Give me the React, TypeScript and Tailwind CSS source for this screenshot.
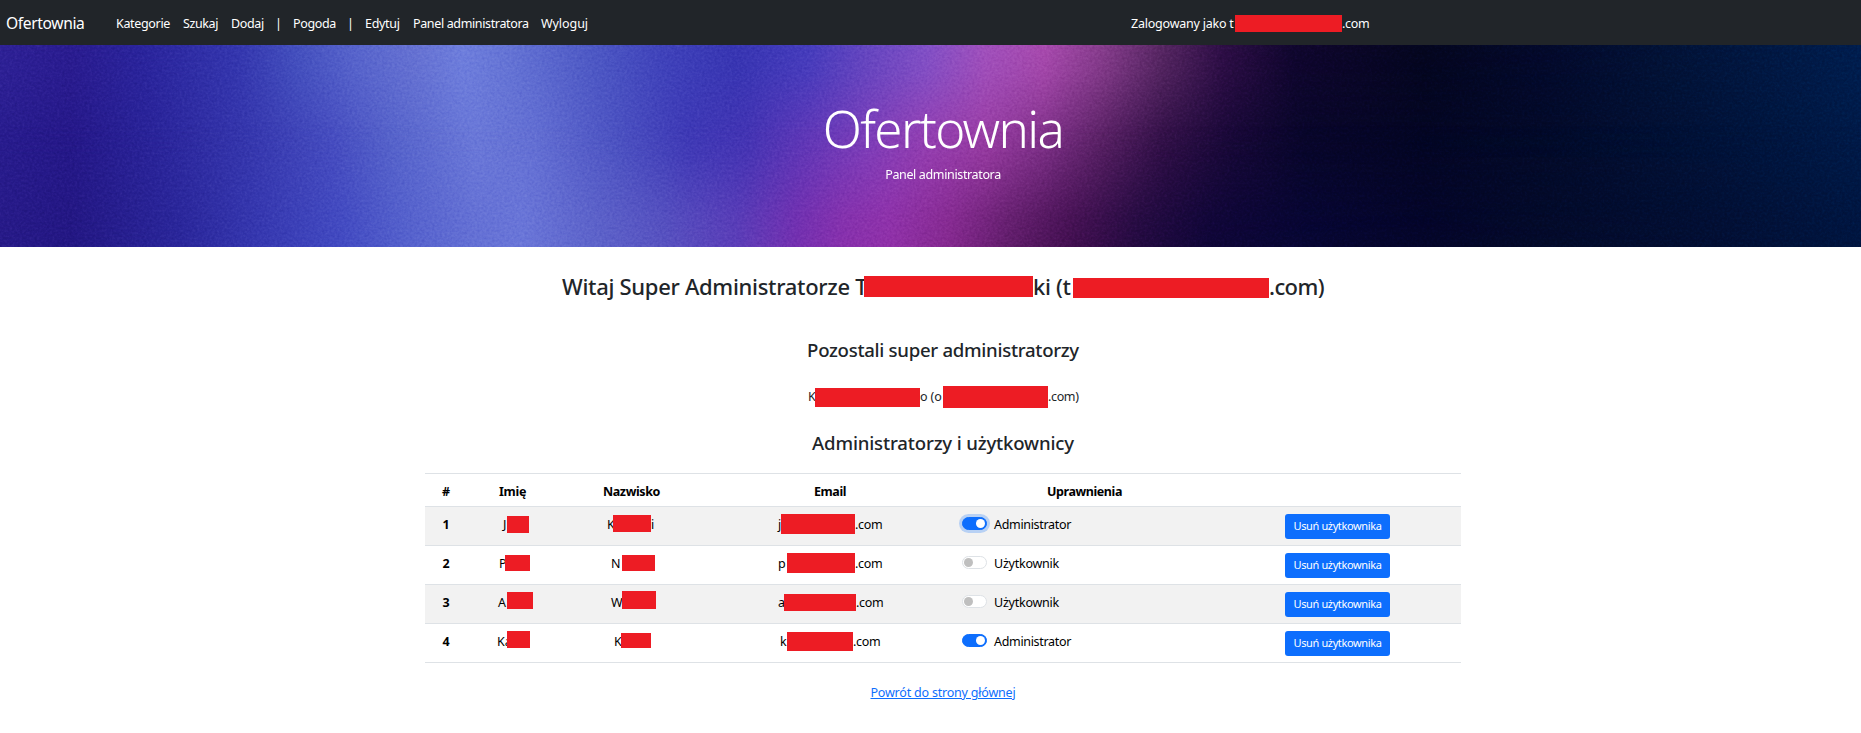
import type { ReactNode } from "react";

type Stop = [number, string];

const TOP: Stop[] = [
  [0, "#2e2196"], [60, "#2a1c90"], [120, "#2a249c"], [200, "#3436ae"], [250, "#4450be"], [300, "#5865cc"],
  [350, "#6672d2"], [390, "#6e7edc"], [430, "#6473d4"], [500, "#4d58c4"], [560, "#3f42ba"], [620, "#3735b2"],
  [680, "#443cbc"], [730, "#6446c0"], [780, "#8050c6"], [830, "#a050bc"], [880, "#a84aae"], [930, "#863c8c"],
  [980, "#562662"], [1030, "#2e0e46"], [1090, "#10062e"], [1200, "#04061f"], [1300, "#03092b"], [1400, "#021236"],
  [1568, "#001d4e"],
];

const MIDDLE: Stop[] = [
  [0, "#281c8e"], [60, "#251889"], [130, "#2a249a"], [210, "#3637ae"], [280, "#464cc0"], [330, "#5663cb"],
  [400, "#6b79d9"], [450, "#6470d4"], [520, "#4c52c2"], [580, "#3e38b6"], [630, "#4434b4"], [680, "#6238b8"],
  [730, "#7e3eba"], [780, "#963fb2"], [830, "#9a3ca4"], [880, "#7e3088"], [930, "#561f62"], [980, "#300f46"],
  [1040, "#160836"], [1100, "#08062a"], [1200, "#040624"], [1300, "#030a29"], [1420, "#021136"], [1568, "#001a48"],
];

const BOTTOM: Stop[] = [
  [0, "#271a88"], [60, "#231783"], [150, "#2a269a"], [220, "#3638b0"], [290, "#434bc2"], [340, "#5460cc"],
  [400, "#6470d4"], [440, "#6a76d8"], [500, "#5e64ca"], [560, "#5852c0"], [620, "#5c3eb8"], [670, "#7430b0"],
  [710, "#8830ac"], [750, "#9030a8"], [800, "#84288e"], [850, "#601c6a"], [900, "#420f50"], [960, "#220a40"],
  [1020, "#0f0638"], [1100, "#070634"], [1200, "#04052a"], [1300, "#030a2a"], [1450, "#020f34"], [1568, "#001540"],
];

function Gradient({ id, stops }: { id: string; stops: Stop[] }) {
  return (
    <linearGradient id={id} x1="0" x2="1" y1="0" y2="0">
      {stops.map(([at, color]) => (
        <stop key={at} offset={at / 1568} stopColor={color} />
      ))}
    </linearGradient>
  );
}

/* Grainy blue-to-violet backdrop of the hero */
function Backdrop() {
  return (
    <svg className="absolute inset-0 h-full w-full" viewBox="0 0 1861 202" preserveAspectRatio="none" aria-hidden="true">
      <defs>
        <Gradient id="g-top" stops={TOP} />
        <Gradient id="g-mid" stops={MIDDLE} />
        <Gradient id="g-bot" stops={BOTTOM} />
        <linearGradient id="f-top" x1="0" x2="0" y1="0" y2="1">
          <stop offset="0" stopColor="#fff" />
          <stop offset="0.14" stopColor="#fff" stopOpacity="0.84" />
          <stop offset="0.28" stopColor="#fff" stopOpacity="0.5" />
          <stop offset="0.42" stopColor="#fff" stopOpacity="0.16" />
          <stop offset="0.56" stopColor="#fff" stopOpacity="0" />
        </linearGradient>
        <linearGradient id="f-bot" x1="0" x2="0" y1="0" y2="1">
          <stop offset="0.4" stopColor="#fff" stopOpacity="0" />
          <stop offset="0.55" stopColor="#fff" stopOpacity="0.16" />
          <stop offset="0.7" stopColor="#fff" stopOpacity="0.5" />
          <stop offset="0.85" stopColor="#fff" stopOpacity="0.84" />
          <stop offset="1" stopColor="#fff" />
        </linearGradient>
        <mask id="m-top"><rect width="1861" height="202" fill="url(#f-top)" /></mask>
        <mask id="m-bot"><rect width="1861" height="202" fill="url(#f-bot)" /></mask>
        <filter id="grain" x="0" y="0" width="100%" height="100%" colorInterpolationFilters="sRGB">
          <feTurbulence type="fractalNoise" baseFrequency="0.4" numOctaves="2" seed="4" />
          <feColorMatrix type="saturate" values="0" />
          <feComponentTransfer><feFuncA type="linear" slope="0" intercept="1" /></feComponentTransfer>
        </filter>
      </defs>
      <rect width="1861" height="202" fill="url(#g-mid)" />
      <rect width="1861" height="202" fill="url(#g-top)" mask="url(#m-top)" />
      <rect width="1861" height="202" fill="url(#g-bot)" mask="url(#m-bot)" />
      <rect width="1861" height="202" filter="url(#grain)" className="opacity-30 mix-blend-soft-light" />
    </svg>
  );
}

const T = "block shrink-0 whitespace-nowrap";

function Bar({ size }: { size: string }) {
  return <span className={`block shrink-0 bg-[#ed1c24] ${size}`} />;
}

const NAV: [string, string][] = [
  ["Kategorie", "w-[54px] tracking-[-0.33px]"],
  ["Szukaj", "w-[35px] tracking-[-0.4px]"],
  ["Dodaj", "w-[33px] tracking-[-0.35px]"],
  ["|", "w-[3px] flex justify-center"],
  ["Pogoda", "w-[43px] tracking-[-0.35px]"],
  ["|", "w-[3px] flex justify-center"],
  ["Edytuj", "w-[35px] tracking-[-0.3px]"],
  ["Panel administratora", "w-[115px] tracking-[-0.36px]"],
  ["Wyloguj", "w-[47px] tracking-[-0.07px]"],
];

function Navbar() {
  return (
    <nav className="flex h-[45px] items-start bg-[#212529] pt-[14px] text-[12.5px] leading-5 text-white">
      <a className={`${T} ml-[6px] w-[110px] text-[15.6px] leading-[18px] tracking-[-0.37px]`}>Ofertownia</a>
      <div className="flex gap-[13px]">
        {NAV.map(([label, cls], i) => (
          <a key={i} className={`shrink-0 whitespace-nowrap ${cls}`}>{label}</a>
        ))}
      </div>
      <div className="ml-[543px] flex">
        <span className={`${T} w-[104px] tracking-[-0.22px]`}>Zalogowany jako t</span>
        <Bar size="mt-px h-[17px] w-[107px]" />
        <span className={`${T} tracking-[-0.3px]`}>.com</span>
      </div>
    </nav>
  );
}

function Hero() {
  return (
    <header className="relative isolate h-[202px] overflow-hidden">
      <Backdrop />
      <div className="relative flex flex-col items-center pt-[53px] pl-[25px] text-white">
        <h1 className="text-[51px] leading-[60px] font-light tracking-[-1.6px]">Ofertownia</h1>
        <p className="mt-[7px] text-[12.5px] leading-5 tracking-[-0.36px]">Panel administratora</p>
      </div>
    </header>
  );
}

function Toggle({ on, focused }: { on: boolean; focused?: boolean }) {
  return (
    <span
      className={`mt-[2px] flex h-[13px] w-[25px] shrink-0 items-center rounded-full border p-px ${
        on ? "justify-end border-[#0d6efd] bg-[#0d6efd]" : "justify-start border-[#dee2e6] bg-white"
      } ${focused ? "ring-[3px] ring-[#0d6efd]/25" : ""}`}
    >
      <span className={`block size-[9px] rounded-full ${on ? "bg-white" : "bg-[#bfbfbf]"}`} />
    </span>
  );
}

type Masked = { pad: string; lead: string; leadW: string; bar: string; tail?: string };

function MaskedCell({ pad, lead, leadW, bar, tail }: Masked) {
  return (
    <div className={`flex items-start ${pad}`}>
      <span className={`${T} ${leadW}`}>{lead}</span>
      <Bar size={bar} />
      {tail && <span className={`${T} tracking-[-0.3px]`}>{tail}</span>}
    </div>
  );
}

type User = { first: Masked; last: Masked; email: Masked; admin: boolean; focused?: boolean };

const USERS: User[] = [
  {
    first: { pad: "pl-9", lead: "J", leadW: "w-[4px]", bar: "mt-px h-[17px] w-[22px]" },
    last: { pad: "pl-[49px]", lead: "K", leadW: "w-[6px]", bar: "h-[17px] w-[38px]", tail: "i" },
    email: { pad: "pl-[73px]", lead: "j", leadW: "w-[3px]", bar: "-mt-px h-5 w-[74px]", tail: ".com" },
    admin: true,
    focused: true,
  },
  {
    first: { pad: "pl-8", lead: "P", leadW: "w-[6px]", bar: "mt-px h-4 w-[25px]" },
    last: { pad: "pl-[53px]", lead: "N", leadW: "w-[11px]", bar: "mt-px h-4 w-[33px]" },
    email: { pad: "pl-[73px]", lead: "p", leadW: "w-[9px]", bar: "-mt-px h-5 w-[68px]", tail: ".com" },
    admin: false,
  },
  {
    first: { pad: "pl-[31px]", lead: "A", leadW: "w-[9px]", bar: "-mt-px h-[17px] w-[26px]" },
    last: { pad: "pl-[53px]", lead: "W", leadW: "w-[11px]", bar: "-mt-[2px] h-[18px] w-[34px]" },
    email: { pad: "pl-[73px]", lead: "a", leadW: "w-[6px]", bar: "mt-px h-[17px] w-[72px]", tail: ".com" },
    admin: false,
  },
  {
    first: { pad: "pl-[30px]", lead: "Ka", leadW: "w-[10px]", bar: "-mt-px h-[17px] w-[23px]" },
    last: { pad: "pl-14", lead: "K", leadW: "w-[7px]", bar: "mt-px h-[15px] w-[30px]" },
    email: { pad: "pl-[75px]", lead: "k", leadW: "w-[7px]", bar: "h-[19px] w-[66px]", tail: ".com" },
    admin: true,
  },
];

function Row({ children, tint, height }: { children: ReactNode; tint?: boolean; height: string }) {
  return (
    <div
      className={`grid grid-cols-[42px_91px_147px_250px_259px_247px] items-start border-b border-[#dee2e6] pt-2 ${height} ${
        tint ? "bg-[#f2f2f2]" : ""
      }`}
    >
      {children}
    </div>
  );
}

function UserTable() {
  return (
    <div className="mt-[17px] w-[1036px] border-t border-[#dee2e6] text-[12.5px] leading-5 text-black">
      <Row height="h-[33px]">
        <b className="text-center">#</b>
        <b className="text-center tracking-[-0.3px]">Imię</b>
        <b className="text-center tracking-[-0.38px]">Nazwisko</b>
        <b className="text-center tracking-[-0.4px]">Email</b>
        <b className="text-center tracking-[-0.42px]">Uprawnienia</b>
      </Row>
      {USERS.map((u, i) => (
        <Row key={i} height="h-[39px]" tint={i % 2 === 0}>
          <b className="text-center">{i + 1}</b>
          <MaskedCell {...u.first} />
          <MaskedCell {...u.last} />
          <MaskedCell {...u.email} />
          <div className="flex items-start gap-[7px] pl-[7px]">
            <Toggle on={u.admin} focused={u.focused} />
            <span className={u.admin ? "tracking-[-0.32px]" : "tracking-[-0.23px]"}>
              {u.admin ? "Administrator" : "Użytkownik"}
            </span>
          </div>
          <button className="-mt-px h-[25px] w-[105px] justify-self-center rounded-[3px] bg-[#0d6efd] pb-px text-[11px] leading-6 tracking-[-0.37px] whitespace-nowrap text-white">
            Usuń użytkownika
          </button>
        </Row>
      ))}
    </div>
  );
}

export default function App() {
  return (
    <div className="min-h-[733px] bg-white font-['Noto_Sans','Open_Sans',sans-serif] text-[#212529]">
      <Navbar />
      <Hero />
      <main className="flex flex-col items-center pt-6 pl-[25px]">
        <h2 className="flex h-[30px] items-start text-[22px] leading-[30px] font-medium tracking-[-0.3px]">
          <span className={`${T} w-[302px]`}>Witaj Super Administratorze T</span>
          <Bar size="mt-[5px] h-[21px] w-[169px]" />
          <span className={`${T} w-[40px]`}>ki (t</span>
          <Bar size="mt-[7px] h-5 w-[196px]" />
          <span className={`${T} w-[55px] tracking-[-0.6px]`}>.com)</span>
        </h2>
        <h3 className="mt-9 text-[18.6px] leading-[26px] font-medium tracking-[-0.29px]">Pozostali super administratorzy</h3>
        <p className="mt-6 flex h-5 items-start text-[12.5px] leading-5 tracking-[-0.35px]">
          <span className={`${T} w-[7px]`}>K</span>
          <Bar size="mt-px h-[19px] w-[105px]" />
          <span className={`${T} w-[23px] tracking-[-0.1px]`}>o (o</span>
          <Bar size="-mt-px h-[22px] w-[105px]" />
          <span className={`${T} w-[30px]`}>.com)</span>
        </p>
        <h3 className="mt-[23px] text-[18.6px] leading-[26px] font-medium tracking-[-0.16px]">Administratorzy i użytkownicy</h3>
        <UserTable />
        <a className="mt-5 text-[12.5px] leading-5 tracking-[-0.2px] text-[#0d6efd] underline">Powrót do strony głównej</a>
      </main>
    </div>
  );
}
